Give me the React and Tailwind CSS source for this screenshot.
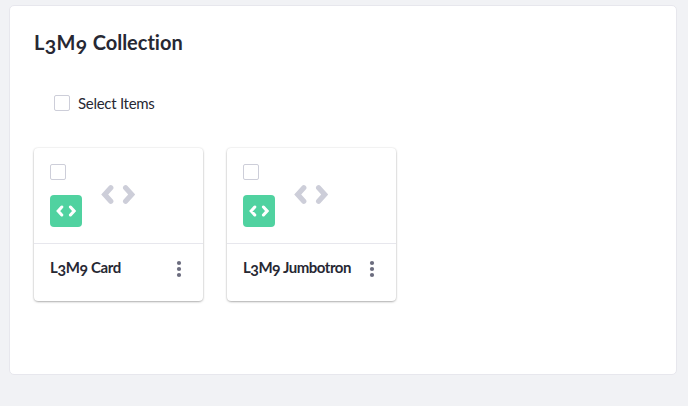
import React from "react";

// Old-style figure: sits on x-height and drops below the baseline.
function Fig({ children }) {
  return <span className="relative top-[0.2em] inline-block text-[0.98em] leading-none">{children}</span>;
}

function Code({ className }) {
  return (
    <svg viewBox="0 0 34 20" className={className} fill="none" stroke="currentColor" strokeWidth="5.2" strokeLinecap="round" strokeLinejoin="miter">
      <path d="M9.8 3.2 3.7 10l6.1 6.8M24.6 3.2l6.1 6.8-6.1 6.8" />
    </svg>
  );
}

function Checkbox() {
  return <span className="block h-4 w-4 shrink-0 rounded-[2px] border border-[#cdced9] bg-white" />;
}

function Card({ name, nameClass }) {
  return (
    <article className="flex h-[153px] w-[169px] flex-col rounded-[4px] bg-white shadow-[0_1px_3px_-1px_rgba(0,0,0,0.6),0_0_2px_rgba(0,0,0,0.12)]">
      <div className="flex h-[96px] border-b border-[#e7e7ed] pl-4 pt-4">
        <div className="flex w-8 flex-col gap-[15px]">
          <Checkbox />
          <span className="flex h-8 w-8 items-center justify-center rounded-[4px] bg-[#50d2a0] text-white">
            <Code className="h-3 w-5" />
          </span>
        </div>
        <Code className="ml-[19px] mt-5 h-[21px] w-[34px] text-[#cdced9]" />
      </div>
      <div className="flex justify-between pl-4 pr-[22px] pt-[13px]">
        <h2 className={`whitespace-nowrap text-[15px] font-bold leading-5 ${nameClass}`}>
          L<Fig>3</Fig>M<Fig>9</Fig> {name}
        </h2>
        <svg viewBox="0 0 4 16" className="mt-1 h-4 w-1 shrink-0 overflow-visible fill-[#6b6c7e]">
          <circle cx="2" cy="2" r="2.1" />
          <circle cx="2" cy="8" r="2.1" />
          <circle cx="2" cy="14" r="2.1" />
        </svg>
      </div>
    </article>
  );
}

export default function App() {
  return (
    <div className="h-[406px] w-[688px] bg-[#f1f2f5] pl-[9px] pt-[5px] font-['Lato','Open_Sans',sans-serif] text-[#272833] [font-variant-ligatures:none]">
      <main className="h-[370px] w-[668px] rounded-[5px] border border-[#e7e7ed] bg-white pl-6">
        <h1 className="whitespace-nowrap pt-[22px] text-[20px] font-bold leading-7">
          <span className="tracking-[0.35px]">
            L<Fig>3</Fig>M<Fig>9</Fig>{" "}
          </span>
          <span>Collection</span>
        </h1>
        <div className="mt-[39px] flex h-4 items-center gap-2 pl-5">
          <Checkbox />
          <span className="whitespace-nowrap text-[15px] leading-4 tracking-[-0.28px]">Select Items</span>
        </div>
        <div className="mt-[37px] flex gap-6">
          <Card name="Card" nameClass="tracking-[-0.35px]" />
          <Card name="Jumbotron" nameClass="tracking-[-0.47px]" />
        </div>
      </main>
    </div>
  );
}
